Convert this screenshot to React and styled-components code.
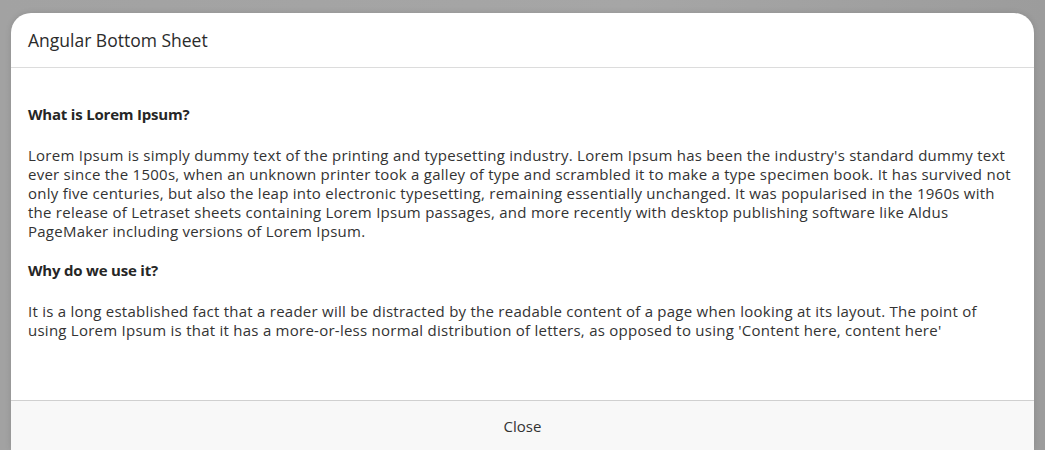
import React from "react";
import styled, { createGlobalStyle } from "styled-components";

const GlobalStyle = createGlobalStyle`
  html, body {
    margin: 0;
    padding: 0;
    height: 100%;
    overflow: hidden;
  }
  body {
    background: #a4a4a4;
    font-family: "Open Sans", "Noto Sans", sans-serif;
  }
`;

const Backdrop = styled.div`
  height: 450px;
  padding: 13px 11px 0 11px;
  box-sizing: border-box;
  background: linear-gradient(to right, #a2a2a2, #a6a6a6 60%, #9c9c9c);
`;

const Sheet = styled.div`
  height: 100%;
  background: #fff;
  border-radius: 20px 20px 0 0;
  display: flex;
  flex-direction: column;
  overflow: hidden;
  box-shadow: 0 0 6px rgba(0, 0, 0, 0.12);
`;

const Header = styled.div`
  height: 54px;
  flex: none;
  display: flex;
  align-items: center;
  padding: 0 17px;
  border-bottom: 1px solid #dcdcdc;
`;

const Title = styled.h3`
  margin: 0;
  font-size: 17.5px;
  font-weight: 400;
  color: #2b2b2b;
`;

const Content = styled.div`
  flex: 1;
  padding: 37px 17px 0 17px;
  color: #333;
  font-size: 15px;
  line-height: 19px;
  letter-spacing: 0.25px;
`;

const Heading = styled.h4`
  margin: 0 0 22px 0;
  font-size: 15px;
  font-weight: 700;
  letter-spacing: -0.2px;
  color: #262626;
`;

const Paragraph = styled.p`
  margin: 0 0 20px 0;
`;

const Footer = styled.div`
  flex: none;
  height: 49px;
  background: #f8f8f8;
  border-top: 1px solid #d0d0d0;
  display: flex;
  justify-content: center;
  align-items: center;
`;

const CloseButton = styled.button`
  border: none;
  background: transparent;
  font-family: "Open Sans", "Noto Sans", sans-serif;
  font-size: 15px;
  color: #333;
  padding: 4px 12px;
  cursor: pointer;
`;

export default function App() {
  return (
    <>
      <GlobalStyle />
      <Backdrop>
        <Sheet>
          <Header>
            <Title>Angular Bottom Sheet</Title>
          </Header>
          <Content>
            <Heading>What is Lorem Ipsum?</Heading>
            <Paragraph>
              Lorem Ipsum is simply dummy text of the printing and typesetting industry. Lorem Ipsum has been the
              industry's standard dummy text ever since the 1500s, when an unknown printer took a galley of type and
              scrambled it to make a type specimen book. It has survived not only five centuries, but also the leap
              into electronic typesetting, remaining essentially unchanged. It was popularised in the 1960s with the
              release of Letraset sheets containing Lorem Ipsum passages, and more recently with desktop publishing
              software like Aldus PageMaker including versions of Lorem Ipsum.
            </Paragraph>
            <Heading>Why do we use it?</Heading>
            <Paragraph>
              It is a long established fact that a reader will be distracted by the readable content of a page when
              looking at its layout. The point of using Lorem Ipsum is that it has a more-or-less normal distribution
              of letters, as opposed to using 'Content here, content here'
            </Paragraph>
          </Content>
          <Footer>
            <CloseButton>Close</CloseButton>
          </Footer>
        </Sheet>
      </Backdrop>
    </>
  );
}
